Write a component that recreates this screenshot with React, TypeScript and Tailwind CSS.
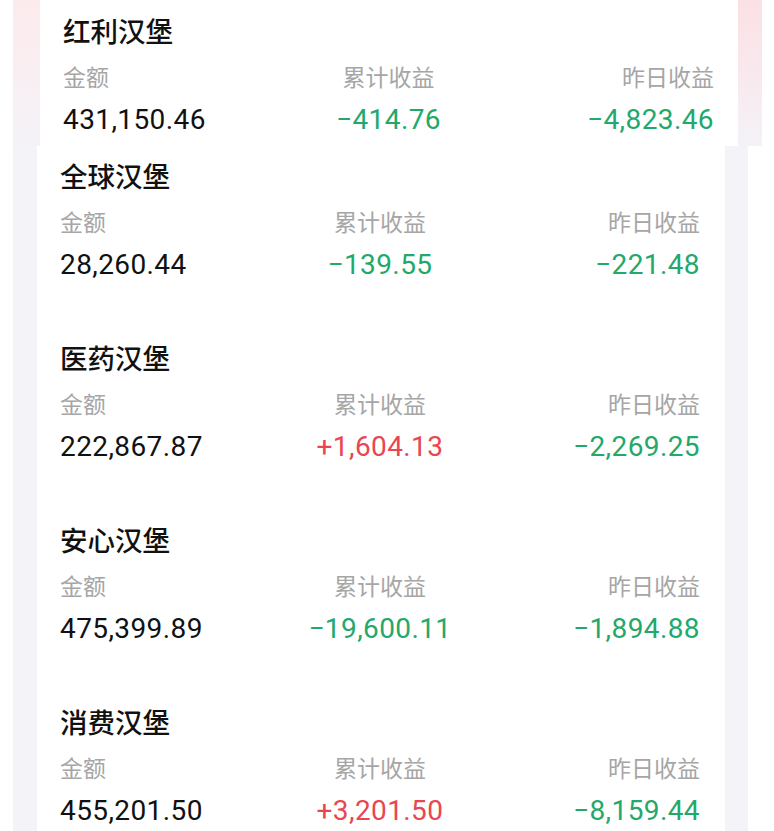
const funds = [
  { name: "全球汉堡", amount: "28,260.44", total: "-139.55", yesterday: "-221.48" },
  { name: "医药汉堡", amount: "222,867.87", total: "+1,604.13", yesterday: "-2,269.25" },
  { name: "安心汉堡", amount: "475,399.89", total: "-19,600.11", yesterday: "-1,894.88" },
  { name: "消费汉堡", amount: "455,201.50", total: "+3,201.50", yesterday: "-8,159.44" },
];

const font = "font-['Roboto','Noto_Sans_CJK_SC',sans-serif]";

function tone(v: string) {
  return v.startsWith("+") ? "text-[#e9464f]" : "text-[#23a86c]";
}

// the app draws a real minus sign, wide as a digit
function signed(v: string) {
  return v.startsWith("-") ? "\u2212" + v.slice(1) : v;
}

function FundRow({
  name,
  amount,
  total,
  yesterday,
}: {
  name: string;
  amount: string;
  total: string;
  yesterday: string;
}) {
  return (
    <>
      <h3 className="text-[27.5px] leading-[36px] font-medium text-[#111]">{name}</h3>
      <div className="mt-[13px] grid grid-cols-3 text-[23px] leading-[30px] text-[#a6a6a6]">
        <span>金额</span>
        <span className="text-center">累计收益</span>
        <span className="text-right">昨日收益</span>
      </div>
      <div className="mt-[9px] grid grid-cols-3 text-[28px] leading-[34px] tracking-[0.4px]">
        <span className="text-[#111]">{amount}</span>
        <span className={`text-center ${tone(total)}`}>{signed(total)}</span>
        <span className={`text-right ${tone(yesterday)}`}>{signed(yesterday)}</span>
      </div>
    </>
  );
}

export default function App() {
  return (
    <main className={`min-h-screen w-[774px] bg-white ${font}`}>
      {/* top strip, cropped from a different shot */}
      <section className="flex h-[146px]">
        <div className="w-[13px] bg-white" />
        <div className="w-[27px] bg-gradient-to-b from-[#fcebed] to-[#f4f2f7]" />
        <div className="w-[698px] bg-white pt-[15px] pl-[23px] pr-[24px]">
          <FundRow name="红利汉堡" amount="431,150.46" total="-414.76" yesterday="-4,823.46" />
        </div>
        <div className="w-[24px] bg-gradient-to-b from-[#fbe0e4] via-[#f8e9ee] to-[#f4f2f7]" />
        <div className="flex-1 bg-white" />
      </section>

      <section className="flex">
        <div className="w-[13px] bg-white" />
        <div className="w-[24px] bg-[#f4f3f8]" />
        <div className="w-[688px] bg-white">
          {funds.map((f) => (
            <div key={f.name} className="h-[182px] pt-[14px] pl-[23px] pr-[25px]">
              <FundRow {...f} />
            </div>
          ))}
        </div>
        <div className="w-[23px] bg-[#f4f3f8]" />
        <div className="flex-1 bg-white" />
      </section>
    </main>
  );
}
